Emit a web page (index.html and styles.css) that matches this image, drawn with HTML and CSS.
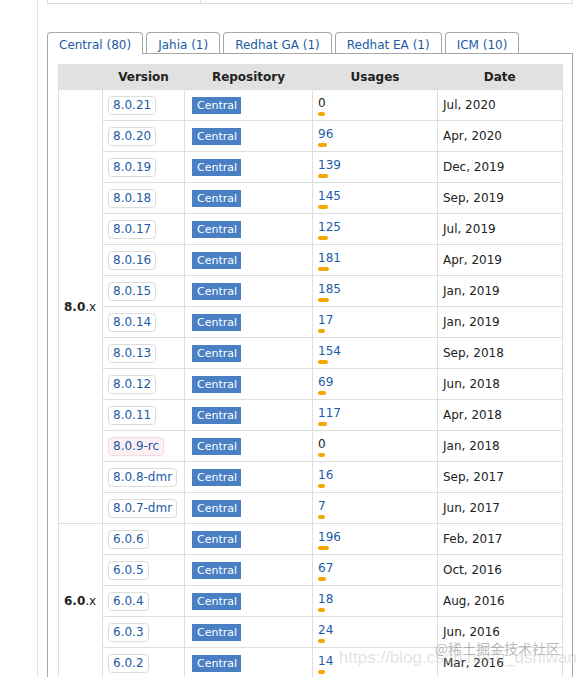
FILE: index.html
```html
<!DOCTYPE html>
<html>
<head>
<meta charset="utf-8">
<link rel="stylesheet" href="styles.css">
</head>
<body>
<div class="page">
  <div class="topbox"><div class="topcell"></div><div class="topcell2"></div></div>

  <ul class="tabs">
    <li class="tab active">Central (80)</li>
    <li class="tab">Jahia (1)</li>
    <li class="tab">Redhat GA (1)</li>
    <li class="tab">Redhat EA (1)</li>
    <li class="tab">ICM (10)</li>
  </ul>

  <div class="panel">
    <table class="grid">
      <colgroup>
        <col class="c-group"><col class="c-ver"><col class="c-repo"><col class="c-use"><col class="c-date">
      </colgroup>
      <thead>
        <tr><th></th><th>Version</th><th>Repository</th><th>Usages</th><th>Date</th></tr>
      </thead>
      <tbody>
        <tr><td class="group" rowspan="14"><b>8.0</b>.x</td><td><a class="ver">8.0.21</a></td><td><span class="repo">Central</span></td><td class="use"><span class="num zero">0</span><span class="bar" style="width:7px"></span></td><td class="date">Jul, 2020</td></tr>
        <tr><td><a class="ver">8.0.20</a></td><td><span class="repo">Central</span></td><td class="use"><a class="num">96</a><span class="bar" style="width:9px"></span></td><td class="date">Apr, 2020</td></tr>
        <tr><td><a class="ver">8.0.19</a></td><td><span class="repo">Central</span></td><td class="use"><a class="num">139</a><span class="bar" style="width:10px"></span></td><td class="date">Dec, 2019</td></tr>
        <tr><td><a class="ver">8.0.18</a></td><td><span class="repo">Central</span></td><td class="use"><a class="num">145</a><span class="bar" style="width:10px"></span></td><td class="date">Sep, 2019</td></tr>
        <tr><td><a class="ver">8.0.17</a></td><td><span class="repo">Central</span></td><td class="use"><a class="num">125</a><span class="bar" style="width:10px"></span></td><td class="date">Jul, 2019</td></tr>
        <tr><td><a class="ver">8.0.16</a></td><td><span class="repo">Central</span></td><td class="use"><a class="num">181</a><span class="bar" style="width:11px"></span></td><td class="date">Apr, 2019</td></tr>
        <tr><td><a class="ver">8.0.15</a></td><td><span class="repo">Central</span></td><td class="use"><a class="num">185</a><span class="bar" style="width:11px"></span></td><td class="date">Jan, 2019</td></tr>
        <tr><td><a class="ver">8.0.14</a></td><td><span class="repo">Central</span></td><td class="use"><a class="num">17</a><span class="bar" style="width:7px"></span></td><td class="date">Jan, 2019</td></tr>
        <tr><td><a class="ver">8.0.13</a></td><td><span class="repo">Central</span></td><td class="use"><a class="num">154</a><span class="bar" style="width:10px"></span></td><td class="date">Sep, 2018</td></tr>
        <tr><td><a class="ver">8.0.12</a></td><td><span class="repo">Central</span></td><td class="use"><a class="num">69</a><span class="bar" style="width:8px"></span></td><td class="date">Jun, 2018</td></tr>
        <tr><td><a class="ver">8.0.11</a></td><td><span class="repo">Central</span></td><td class="use"><a class="num">117</a><span class="bar" style="width:9px"></span></td><td class="date">Apr, 2018</td></tr>
        <tr><td><a class="ver pre">8.0.9-rc</a></td><td><span class="repo">Central</span></td><td class="use"><span class="num zero">0</span><span class="bar" style="width:7px"></span></td><td class="date">Jan, 2018</td></tr>
        <tr><td><a class="ver">8.0.8-dmr</a></td><td><span class="repo">Central</span></td><td class="use"><a class="num">16</a><span class="bar" style="width:7px"></span></td><td class="date">Sep, 2017</td></tr>
        <tr><td><a class="ver">8.0.7-dmr</a></td><td><span class="repo">Central</span></td><td class="use"><a class="num">7</a><span class="bar" style="width:7px"></span></td><td class="date">Jun, 2017</td></tr>

        <tr><td class="group" rowspan="5"><b>6.0</b>.x</td><td><a class="ver">6.0.6</a></td><td><span class="repo">Central</span></td><td class="use"><a class="num">196</a><span class="bar" style="width:11px"></span></td><td class="date">Feb, 2017</td></tr>
        <tr><td><a class="ver">6.0.5</a></td><td><span class="repo">Central</span></td><td class="use"><a class="num">67</a><span class="bar" style="width:8px"></span></td><td class="date">Oct, 2016</td></tr>
        <tr><td><a class="ver">6.0.4</a></td><td><span class="repo">Central</span></td><td class="use"><a class="num">18</a><span class="bar" style="width:7px"></span></td><td class="date">Aug, 2016</td></tr>
        <tr><td><a class="ver">6.0.3</a></td><td><span class="repo">Central</span></td><td class="use"><a class="num">24</a><span class="bar" style="width:7px"></span></td><td class="date">Jun, 2016</td></tr>
        <tr><td><a class="ver">6.0.2</a></td><td><span class="repo">Central</span></td><td class="use"><a class="num">14</a><span class="bar" style="width:7px"></span></td><td class="date">Mar, 2016</td></tr>
      </tbody>
    </table>
  </div>

  <div class="watermark">
    <span class="wm-site">@稀土掘金技术社区</span>
    <span class="wm-url">https://blog.csdn.net/u_dshiwan</span>
  </div>
</div>
</body>
</html>
```

FILE: styles.css
```css
html, body {
  margin: 0;
  padding: 0;
  overflow: hidden;
  background: #fff;
}

body {
  font-family: "DejaVu Sans", Verdana, sans-serif;
  font-size: 12px;
  color: #222;
}

.page {
  position: relative;
  margin-left: 37px;
  border-left: 1px solid #e4e4e4;
  padding-left: 9px;
  width: 526px;
  min-height: 677px;
}

.topbox {
  display: flex;
  height: 3px;
  border: 1px solid #dcdcdc;
  border-top: none;
  width: 524px;
}

.topcell {
  width: 152px;
  border-right: 1px solid #dcdcdc;
}

.tabs {
  list-style: none;
  margin: 28px 0 0 0;
  padding: 0;
  display: flex;
  gap: 3px;
  position: relative;
  z-index: 1;
}

.tab {
  border: 1px solid #a8a8a8;
  border-bottom: none;
  border-radius: 4px 4px 0 0;
  padding: 5px 11px 1px;
  line-height: 14px;
  color: #1d5aa7;
  background: #fff;
}

.tab.active {
  padding-bottom: 2px;
  margin-bottom: -1px;
}

.panel {
  border: 1px solid #a8a8a8;
  padding: 10px;
}

.grid {
  width: 100%;
  table-layout: fixed;
  border-collapse: collapse;
  border: 1px solid #dedede;
}

.c-group { width: 44px; }
.c-ver { width: 82px; }
.c-repo { width: 128px; }
.c-use { width: 125px; }
.c-date { width: 125px; }

.grid th {
  background: #e1e1e1;
  height: 24px;
  padding: 0;
  font-weight: bold;
  text-align: center;
  color: #222;
  font-size: 12px;
}

.grid td {
  height: 31px;
  padding: 0 5px;
  border: 1px solid #dedede;
  vertical-align: middle;
  box-sizing: border-box;
}

.grid td.group {
  padding-left: 5px;
  color: #222;
}

.ver {
  display: inline-block;
  border: 1px solid #dcdcdc;
  border-radius: 4px;
  padding: 1px 4px;
  line-height: 15px;
  color: #1d5aa7;
  background: #fff;
  text-decoration: none;
}

.ver.pre {
  background: #fcf0f2;
  border-color: #f1dce0;
}

.repo {
  display: inline-block;
  background: #4a7fc4;
  color: #fff;
  font-size: 11px;
  line-height: 17px;
  padding: 0 4px 0 5px;
  margin-left: 2px;
}

.grid td.use {
  vertical-align: top;
  padding-top: 6px;
}

.num {
  display: block;
  line-height: 14px;
  color: #1d5aa7;
  text-decoration: none;
}

.num.zero {
  color: #222;
}

.bar {
  display: block;
  height: 4px;
  margin-top: 2px;
  border-radius: 2px;
  background: #f7a800;
}

.grid td.date {
  color: #222;
}

.watermark {
  position: absolute;
  left: 300px;
  top: 636px;
  width: 240px;
  height: 40px;
  pointer-events: none;
}

.wm-site {
  position: absolute;
  right: 18px;
  top: 2px;
  font-size: 14px;
  color: rgba(120, 120, 120, 0.5);
  white-space: nowrap;
  font-family: "Noto Sans CJK SC", "DejaVu Sans", sans-serif;
}

.wm-url {
  position: absolute;
  right: 1px;
  top: 12px;
  font-size: 17px;
  color: rgba(170, 170, 170, 0.35);
  white-space: nowrap;
  font-family: "Liberation Sans", sans-serif;
}
```
